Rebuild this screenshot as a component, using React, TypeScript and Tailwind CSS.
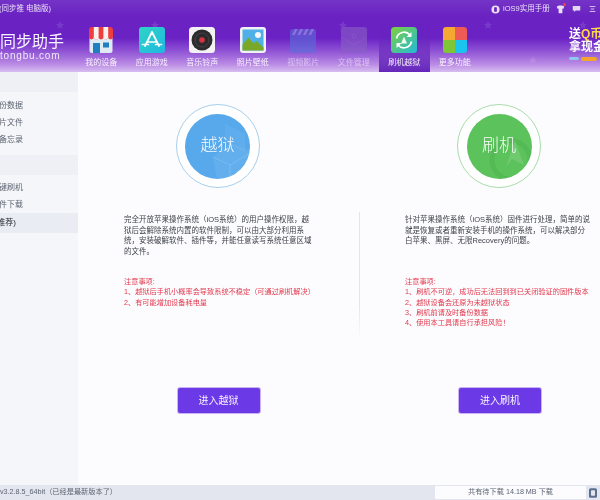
import React from 'react';

const FONT = "font-['Liberation_Sans','Noto_Sans_CJK_SC',sans-serif]";

function StoreIcon() {
  return (
    <svg viewBox="0 0 26 26" className="w-[26px] h-[26px]">
      <rect x="1.5" y="8" width="23" height="18" rx="2.5" fill="#dfeaf3" />
      <path d="M1 3a3 3 0 0 1 3-3h18a3 3 0 0 1 3 3v7a2.4 2.4 0 0 1-4.8 0 2.4 2.4 0 0 1-4.8 0 2.4 2.4 0 0 1-4.8 0 2.4 2.4 0 0 1-4.8 0A2.4 2.4 0 0 1 1 10z" fill="#ee3d3d" />
      <path d="M5.8 0h4.8v10a2.4 2.4 0 0 1-4.8 0zM15.4 0h4.8v10a2.4 2.4 0 0 1-4.8 0z" fill="#fbf1ee" />
      <rect x="5" y="16" width="7" height="10" fill="#1f7fc0" />
      <rect x="15" y="15.5" width="6" height="5" fill="#1f7fc0" />
    </svg>
  );
}

function AppIcon() {
  return (
    <svg viewBox="0 0 26 26" className="w-[26px] h-[26px]">
      <defs>
        <linearGradient id="appg" x1="0" y1="0" x2="1" y2="1">
          <stop offset="0" stopColor="#2fd5c4" />
          <stop offset="1" stopColor="#1fb7e2" />
        </linearGradient>
      </defs>
      <rect width="26" height="26" rx="3" fill="url(#appg)" />
      <path d="M13 5 6 19M13 5l7 14M8.5 15h9M3.5 17.5h6M16.5 17.5h6" stroke="#fff" strokeWidth="1.7" fill="none" strokeLinecap="round" />
    </svg>
  );
}

function MusicIcon() {
  return (
    <svg viewBox="0 0 26 26" className="w-[26px] h-[26px]">
      <rect width="26" height="26" rx="3.5" fill="#f4f1f4" />
      <circle cx="13" cy="13" r="10.5" fill="#2b2a2c" />
      <circle cx="13" cy="13" r="7" fill="none" stroke="#4a484c" strokeWidth="0.8" />
      <circle cx="13" cy="13" r="2.8" fill="#d5333f" />
    </svg>
  );
}

function PhotoIcon() {
  return (
    <svg viewBox="0 0 26 26" className="w-[26px] h-[26px]">
      <rect width="26" height="26" rx="3" fill="#f1f0f5" />
      <rect x="2.5" y="2.5" width="21" height="21" fill="#4fb0e8" />
      <circle cx="18" cy="8" r="3" fill="#f2f7fb" />
      <path d="M2.5 23.5v-6l6-7 5 6 3-2.500 7 6.500v3z" fill="#79a828" />
    </svg>
  );
}

function VideoIcon() {
  return (
    <svg viewBox="0 0 26 26" className="w-[26px] h-[26px]">
      <rect y="2" width="26" height="24" rx="3" fill="#5a6fdb" />
      <path d="M2 8l3-6h2.500l-3 6zM7.500 8l3-6H13l-3 6zM13 8l3-6h2.500l-3 6zM18.500 8l3-6H24l-3 6z" fill="#a9a7ea" />
    </svg>
  );
}

function FileIcon() {
  return (
    <svg viewBox="0 0 26 26" className="w-[26px] h-[26px]">
      <rect width="26" height="26" rx="3" fill="#8a5fc4" />
      <path d="M0 10l13 8 13-8" stroke="#9a72cf" strokeWidth="0.8" fill="none" />
      <circle cx="13" cy="9" r="2" fill="none" stroke="#9f7ad4" strokeWidth="0.8" />
    </svg>
  );
}

function FlashIcon() {
  return (
    <svg viewBox="0 0 26 26" className="w-[26px] h-[26px]">
      <defs>
        <linearGradient id="flashg" x1="0" y1="0" x2="1" y2="1">
          <stop offset="0" stopColor="#7ed13c" />
          <stop offset="1" stopColor="#23b9d8" />
        </linearGradient>
      </defs>
      <rect width="26" height="26" rx="3.5" fill="url(#flashg)" />
      <path d="M5.500 11.500A7.700 7.700 0 0 1 19 8M20.500 14.500A7.700 7.700 0 0 1 7 18" stroke="#fff" strokeWidth="1.700" fill="none" />
      <path d="M20.500 5v5h-5zM5.500 21v-5h5z" fill="#fff" />
      <path d="M13 9.500l-3 7h6z" fill="#fff" opacity="0.9" />
    </svg>
  );
}

function MoreIcon() {
  return (
    <svg viewBox="0 0 26 26" className="w-[26px] h-[26px]">
      <defs>
        <clipPath id="morec">
          <rect width="24" height="26" x="1" rx="3" />
        </clipPath>
      </defs>
      <g clipPath="url(#morec)">
        <rect x="1" width="12" height="13" fill="#f5a933" />
        <rect x="13" width="12" height="13" fill="#ee5a54" />
        <rect x="1" y="13" width="12" height="13" fill="#7fc636" />
        <rect x="13" y="13" width="12" height="13" fill="#19c4ee" />
      </g>
    </svg>
  );
}

const TABS = [
  { label: '我的设备', icon: <StoreIcon /> },
  { label: '应用游戏', icon: <AppIcon /> },
  { label: '音乐铃声', icon: <MusicIcon /> },
  { label: '照片壁纸', icon: <PhotoIcon /> },
  { label: '视频影片', icon: <VideoIcon />, dim: true },
  { label: '文件管理', icon: <FileIcon />, dim: true },
  { label: '刷机越狱', icon: <FlashIcon />, active: true },
  { label: '更多功能', icon: <MoreIcon /> },
];

function BgStar({ className }: { className: string }) {
  return (
    <svg viewBox="0 0 10 10" className={`absolute w-[8px] h-[8px] ${className}`}>
      <path d="M5 0l1.500 3.400 3.500.4-2.600 2.300.8 3.600L5 7.800 1.800 9.700l.8-3.600L0 3.800l3.500-.4z" fill="#fff" opacity="0.11" />
    </svg>
  );
}

function Header() {
  return (
    <header className="relative h-[72px] shrink-0 overflow-hidden bg-[linear-gradient(#7434c6_0px,#6a22c2_16px,#6a22c4_38px,#9257d6_52px,#b98ae4_64px,#d7bdf0_72px)]">
      <BgStar className="left-[56px] top-[21px]" />
      <BgStar className="left-[151px] top-[21px]" />
      <BgStar className="left-[339px] top-[21px]" />
      <BgStar className="left-[484px] top-[21px]" />
      <BgStar className="left-[579px] top-[21px]" />
      <BgStar className="left-[529px] top-[56px]" />

      <div className="flex h-[18px] items-center justify-between pr-[4px] text-[7.500px] text-white/85">
        <span className="-ml-[1px] whitespace-nowrap">(同步推 电脑版)</span>
        <div className="flex items-center">
          <svg viewBox="0 0 10 10" className="w-[9px] h-[9px] mr-[3px]">
            <circle cx="5" cy="5" r="4.500" fill="#e8def5" />
            <rect x="3.500" y="2.500" width="3" height="5" rx="0.600" fill="#6a22c2" />
          </svg>
          <span className="w-[47px] whitespace-nowrap">iOS9实用手册</span>
          <svg viewBox="0 0 12 12" className="relative w-[9px] h-[9px] ml-[6px]">
            <path d="M1 2l3-1.500h4L11 2l-1 3-1.500-.5V11h-5V4.500L2 5z" fill="#e8def5" />
          </svg>
          <span className="relative -top-[5px] -left-[2px] w-[3px] h-[3px] rounded-full bg-[#f0414c]" />
          <svg viewBox="0 0 12 10" className="w-[9px] h-[8px] ml-[4px]">
            <path d="M1 1h10v6H5L3 9V7H1z" fill="#e3d7f3" />
          </svg>
          <svg viewBox="0 0 10 10" className="w-[7px] h-[8px] ml-[8px]">
            <path d="M1 1.500h8M2.500 5h5M1 8.500h8" stroke="#e8def5" strokeWidth="1.200" />
          </svg>
        </div>
      </div>

      <div className="flex h-[54px]">
        <div className="w-[76px] shrink-0 pt-[15px] overflow-hidden text-white/95">
          <div className="text-[16px] leading-[18px] whitespace-nowrap">同步助手</div>
          <div className="text-[10px] leading-[10px] tracking-[0.8px] text-white/85 whitespace-nowrap">tongbu.com</div>
        </div>
        {TABS.map((tab) => (
          <div
            key={tab.label}
            className={`flex w-[50.500px] shrink-0 flex-col items-center pt-[9px] ${tab.active ? 'bg-[linear-gradient(#6a22c200,#6424ba)]' : ''}`}
          >
            <div className={tab.dim ? 'opacity-60' : ''}>{tab.icon}</div>
            <span className={`mt-[5px] text-[8px] leading-[10px] whitespace-nowrap ${tab.dim ? 'text-white/50' : 'text-white/90'}`}>
              {tab.label}
            </span>
          </div>
        ))}
        <div className="flex-1 overflow-hidden pl-[89px] pt-[10px] font-bold">
          <div className="text-[12px] leading-[13px] whitespace-nowrap text-white">
            送<span className="text-[#ffd84a]">Q币</span>
          </div>
          <div className="text-[12px] leading-[13px] whitespace-nowrap text-white">拿现金</div>
          <div className="mt-[3px] flex gap-[2px]">
            <span className="h-[3px] w-[10px] shrink-0 rounded-full bg-[#8fc8ec]" />
            <span className="h-[4px] w-[16px] shrink-0 rounded-full bg-[#f5a52c]" />
          </div>
        </div>
      </div>
    </header>
  );
}

function SideRow({ text, selected }: { text: string; selected?: boolean }) {
  return (
    <div className={`flex items-center overflow-hidden whitespace-nowrap ${selected ? 'h-[20px] bg-[#e9ecf2] text-[#23262e]' : 'h-[17px] text-[#5c6472]'}`}>
      <div className={`flex justify-end ${selected ? 'w-[16px]' : 'w-[23px]'}`}>
        <span className="shrink-0">{text}</span>
      </div>
    </div>
  );
}

function Sidebar() {
  return (
    <aside className="w-[78px] shrink-0 bg-[#f5f6f9] text-[8px]">
      <div className="h-[20px] bg-[#eef0f5]" />
      <div className="pt-[5px]">
        <SideRow text="备份数据" />
        <SideRow text="照片文件" />
        <SideRow text="备忘录" />
      </div>
      <div className="mt-[7px] h-[20px] bg-[#eef0f5]" />
      <div className="pt-[4px]">
        <SideRow text="一键刷机" />
        <SideRow text="固件下载" />
        <SideRow text="备(推荐)" selected />
      </div>
    </aside>
  );
}

function Badge({ label, ring, fill, children }: { label: string; ring: string; fill: string; children: React.ReactNode }) {
  return (
    <div className={`mx-auto flex h-[84px] w-[84px] items-center justify-center rounded-full border-[1.5px] bg-white ${ring}`}>
      <div className={`relative flex h-[65px] w-[65px] items-center justify-center overflow-hidden rounded-full ${fill}`}>
        {children}
        <span className="relative text-[17px] font-light text-white/95">{label}</span>
      </div>
    </div>
  );
}

function Panel({
  className,
  descClass,
  badge,
  desc,
  notes,
  action,
}: {
  className: string;
  descClass: string;
  badge: React.ReactNode;
  desc: string;
  notes: string[];
  action: string;
}) {
  return (
    <div className={`shrink-0 pt-[32px] ${className}`}>
      <div className="pr-[2px]">{badge}</div>
      <p className={`mt-[27px] h-[62px] text-[7.500px] leading-[10.500px] text-[#3c3f46] ${descClass}`}>{desc}</p>
      <div className="h-[111px] text-[7.200px] leading-[10.300px] text-[#e23a4e]">
        {notes.map((n) => (
          <div key={n} className="whitespace-nowrap">{n}</div>
        ))}
      </div>
      <button className="mx-auto flex h-[25px] w-[82px] items-center justify-center rounded-[2px] bg-[#6b39e6] text-[10px] text-white/95 shadow-[0_0_0_1px_#c9b3f3]">
        {action}
      </button>
    </div>
  );
}

export default function App() {
  return (
    <div className={`flex h-[500px] w-[600px] flex-col overflow-hidden bg-[#fcfcfe] blur-[0.35px] ${FONT}`}>
      <Header />
      <div className="flex min-h-0 flex-1">
        <Sidebar />
        <main className="flex flex-1">
          <Panel
            className="ml-[46px] w-[189px]"
            descClass="w-[190px]"
            badge={
              <Badge label="越狱" ring="border-[#a7cfee]" fill="bg-[#58a9ec]">
                <svg viewBox="0 0 65 65" className="absolute inset-0 h-full w-full">
                  <path d="M32 65l-4-22 16-14 21 8v28z" fill="#ffffff" opacity="0.07" />
                  <path d="M40 10l20 10v18L40 28z" fill="#ffffff" opacity="0.05" />
                  <path d="M28 43l17 8 20-12M45 51v14" stroke="#fff" strokeOpacity="0.14" fill="none" />
                </svg>
              </Badge>
            }
            desc="完全开放苹果操作系统（iOS系统）的用户操作权限，越狱后会解除系统内置的软件限制，可以由大部分利用系统，安装破解软件、插件等，并能任意读写系统任意区域的文件。"
            notes={['注意事项:', '1、越狱后手机小概率会导致系统不稳定（可通过刷机解决）', '2、有可能增加设备耗电量']}
            action="进入越狱"
          />
          <div className="ml-[46px] mt-[140px] h-[128px] w-px bg-[linear-gradient(#e2e4e8,#e2e4e8_70%,#e2e4e800)]" />
          <Panel
            className="ml-[45px] w-[190px]"
            descClass="w-[186px]"
            badge={
              <Badge label="刷机" ring="border-[#a9dcab]" fill="bg-[#5cc25c]">
                <svg viewBox="0 0 65 65" className="absolute inset-0 h-full w-full">
                  <circle cx="44" cy="46" r="19" fill="none" stroke="#3fa845" strokeOpacity="0.3" strokeWidth="5" />
                  <path d="M48 26l9 25-12-6-6 8z" fill="#8ed48b" opacity="0.4" />
                </svg>
              </Badge>
            }
            desc="针对苹果操作系统（iOS系统）固件进行处理，简单的说就是恢复或者重新安装手机的操作系统，可以解决部分白苹果、黑屏、无限Recovery的问题。"
            notes={[
              '注意事项:',
              '1、刷机不可逆，成功后无法回到到已关闭验证的固件版本',
              '2、越狱设备会还原为未越狱状态',
              '3、刷机前请及时备份数据',
              '4、使用本工具请自行承担风险！',
            ]}
            action="进入刷机"
          />
        </main>
      </div>
      <footer className="flex h-[15px] shrink-0 items-center justify-between bg-[#e3e6ee] pr-[3px] text-[7.200px] text-[#5c6472]">
        <span className="whitespace-nowrap">v3.2.8.5_64bit（已经是最新版本了）</span>
        <div className="flex items-center">
          <div className="flex h-[13px] w-[151px] items-center justify-center gap-[3px] bg-[#fcfcfe] whitespace-nowrap">
            共有待下载 14.18 MB 下载
          </div>
          <svg viewBox="0 0 10 12" className="ml-[3px] h-[10px] w-[8px]">
            <rect width="10" height="12" rx="2" fill="#5b6f8e" />
            <rect x="2.500" y="2.500" width="5" height="7" rx="1" fill="#e3e6ee" />
          </svg>
        </div>
      </footer>
    </div>
  );
}
